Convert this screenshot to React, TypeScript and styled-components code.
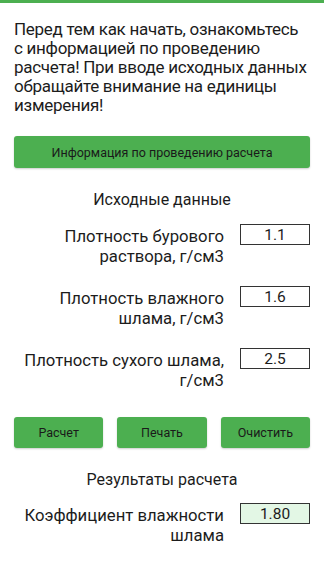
import React from "react";
import styled, { createGlobalStyle } from "styled-components";

const GlobalStyle = createGlobalStyle`
  html, body {
    margin: 0;
    padding: 0;
    background: #ffffff;
  }
  body {
    font-family: Roboto, "Noto Sans", Arial, sans-serif;
    color: #1c1c1c;
  }
`;

const fields = [
  { label: "Плотность бурового раствора, г/см3", value: "1.1" },
  { label: "Плотность влажного шлама, г/см3", value: "1.6" },
  { label: "Плотность сухого шлама, г/см3", value: "2.5" },
];

export default function App() {
  return (
    <>
      <GlobalStyle />
      <Screen>
        <TopBar />
        <Content>
          <Intro>
            Перед тем как начать, ознакомьтесь с информацией по проведению
            расчета! При вводе исходных данных обращайте внимание на единицы
            измерения!
          </Intro>
          <WideButton>Информация по проведению расчета</WideButton>
          <Heading>Исходные данные</Heading>
          <Fields>
            {fields.map((f) => (
              <FieldRow key={f.label}>
                <Label>{f.label}</Label>
                <ValueBox>{f.value}</ValueBox>
              </FieldRow>
            ))}
          </Fields>
          <ButtonRow>
            <ActionButton>Расчет</ActionButton>
            <ActionButton>Печать</ActionButton>
            <ActionButton>Очистить</ActionButton>
          </ButtonRow>
          <Heading>Результаты расчета</Heading>
          <ResultRow>
            <Label>Коэффициент влажности шлама</Label>
            <ValueBox $result>1.80</ValueBox>
          </ResultRow>
        </Content>
      </Screen>
    </>
  );
}

const Screen = styled.div`
  width: 324px;
  height: 576px;
  overflow: hidden;
  background: #ffffff;
`;

const TopBar = styled.div`
  height: 3px;
  background: #4caf50;
`;

const Content = styled.div`
  padding: 17px 14px 0 14px;
  display: flex;
  flex-direction: column;
`;

const Intro = styled.p`
  margin: 0;
  font-size: 17px;
  line-height: 19px;
  letter-spacing: -0.28px;
  color: #1c1c1c;
`;

const WideButton = styled.div`
  margin-top: 21px;
  height: 32px;
  display: flex;
  align-items: center;
  justify-content: center;
  background: #4caf50;
  border-radius: 3px;
  font-size: 12.5px;
  color: #1a1a1a;
  box-shadow: 0 1px 2px rgba(0, 0, 0, 0.2);
`;

const Heading = styled.div`
  margin-top: 22px;
  text-align: center;
  font-size: 16px;
  line-height: 20px;
  color: #1c1c1c;
`;

const Fields = styled.div`
  margin-top: 14px;
  display: flex;
  flex-direction: column;
  gap: 19px;
`;

const FieldRow = styled.div`
  display: grid;
  grid-template-columns: 1fr 70px;
  column-gap: 16px;
  align-items: start;
`;

const ResultRow = styled(FieldRow)`
  margin-top: 13px;
`;

const Label = styled.div`
  text-align: right;
  font-size: 16.7px;
  line-height: 20px;
  color: #1c1c1c;
  padding-top: 3px;
  padding-left: 6px;
`;

const ValueBox = styled.div<{ $result?: boolean }>`
  height: 21px;
  box-sizing: border-box;
  border: 1.3px solid #333333;
  background: ${(p) => (p.$result ? "#e3f7e5" : "#ffffff")};
  display: flex;
  align-items: center;
  justify-content: center;
  font-size: 15.5px;
  color: #1c1c1c;
`;

const ButtonRow = styled.div`
  margin-top: 26px;
  display: grid;
  grid-template-columns: repeat(3, 1fr);
  column-gap: 14px;
`;

const ActionButton = styled.div`
  height: 31px;
  display: flex;
  align-items: center;
  justify-content: center;
  background: #4caf50;
  border-radius: 3px;
  font-size: 12.5px;
  color: #1a1a1a;
  box-shadow: 0 1px 2px rgba(0, 0, 0, 0.2);
`;
